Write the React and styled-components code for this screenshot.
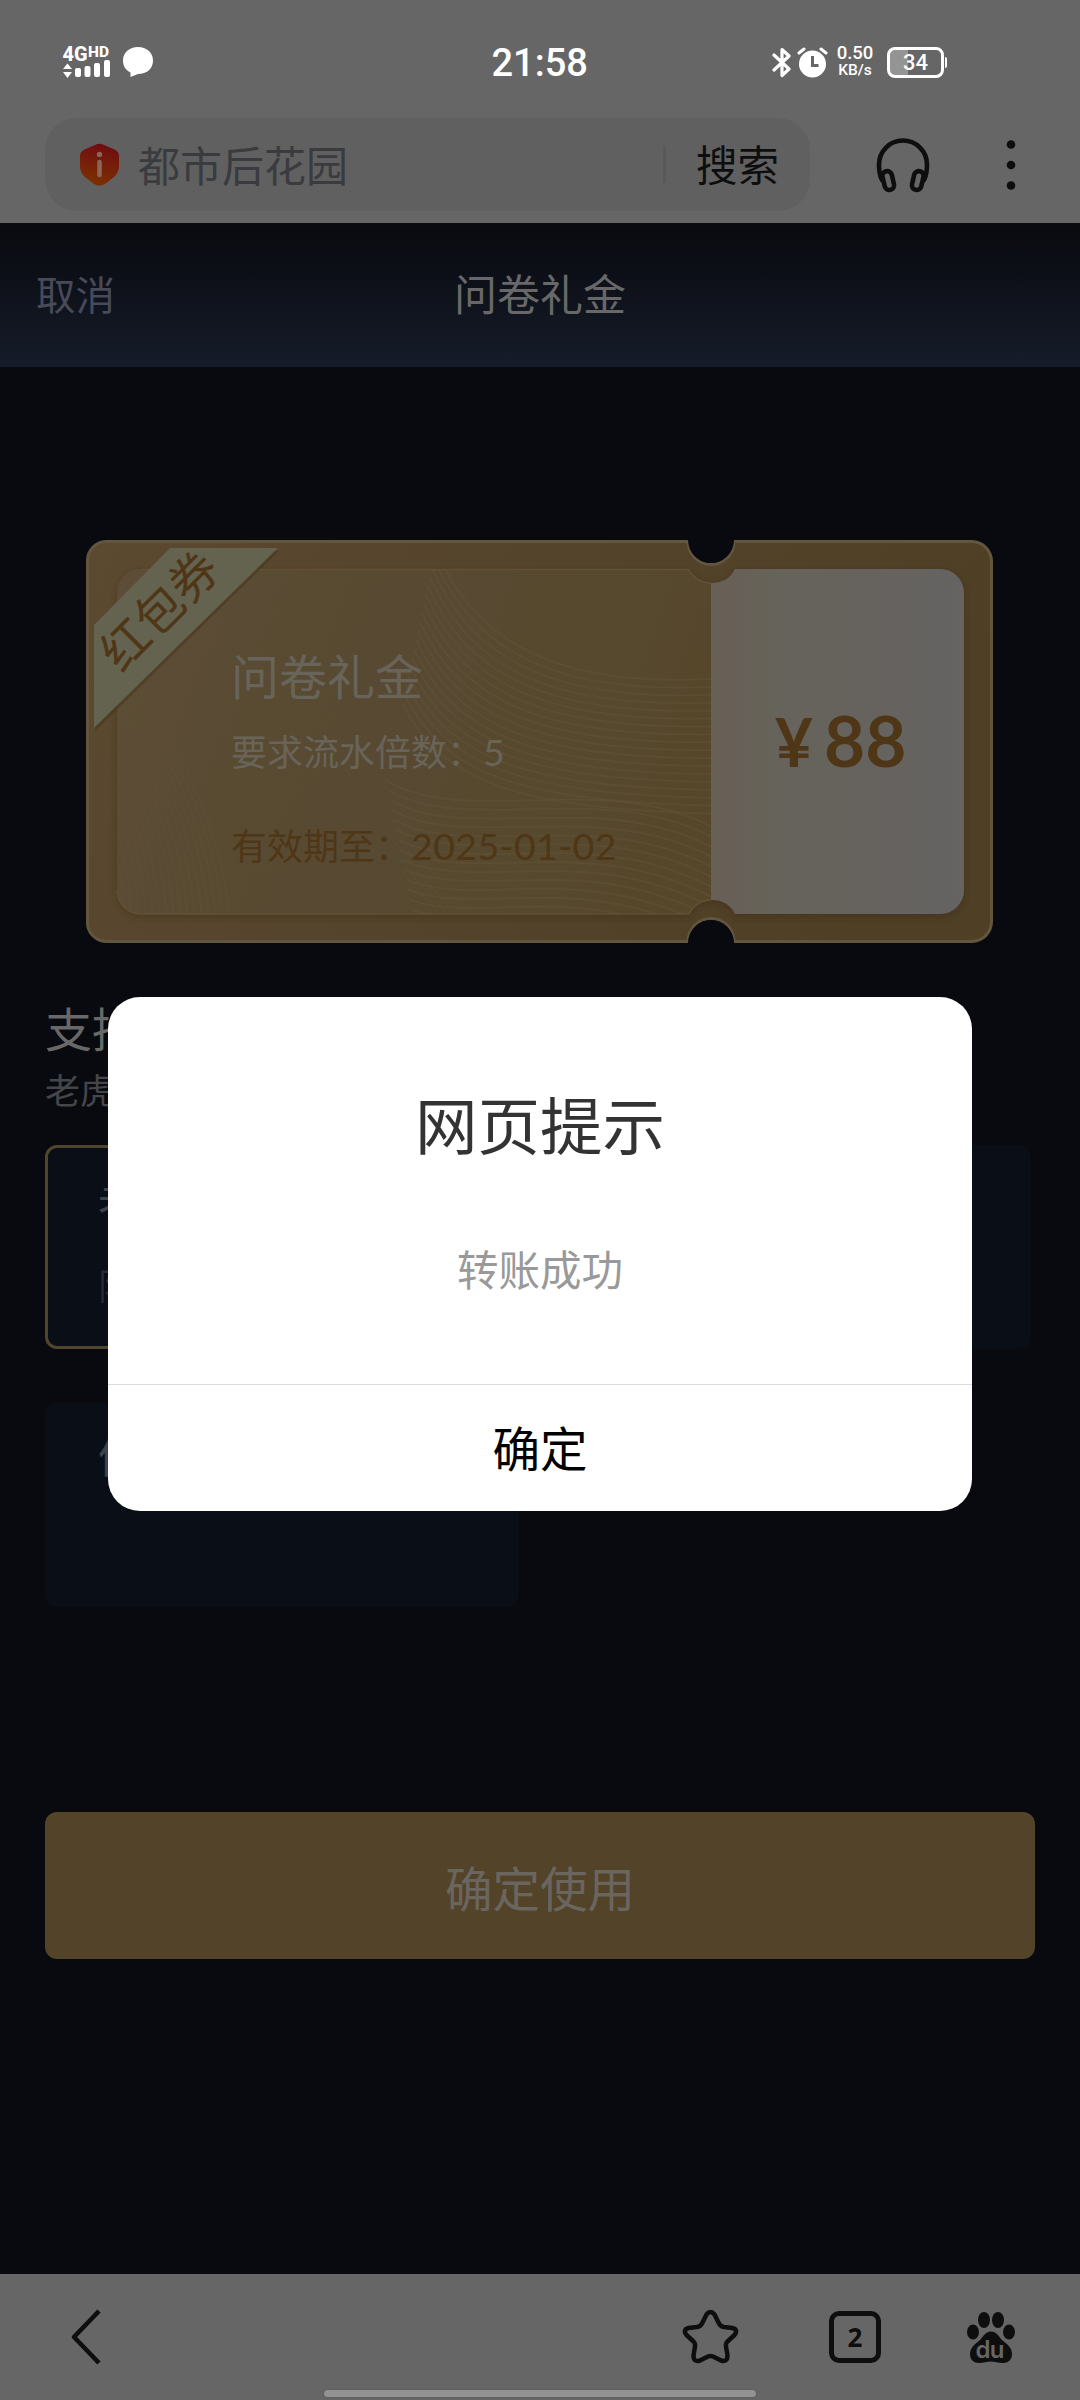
import React from "react"
import styled, { createGlobalStyle, ThemeProvider } from "styled-components"

const theme = {
  fonts: {
    primary: `"Noto Sans CJK SC", "Noto Sans", sans-serif`,
    digits: `Roboto, "Noto Sans CJK SC", sans-serif`,
    amount: `Lato, "Noto Sans CJK SC", sans-serif`,
  },
  colors: {
    page: "#090a0f",
    chrome: "#666666",
    ink: "#0e0e0e",
    card: "#090e17",
    gold: "#524329",
    brown: "#4f3617",
  },
}

const GlobalStyle = createGlobalStyle`
  * {
    box-sizing: border-box;
  }
  body {
    margin: 0;
    background: #090a0f;
  }
  h1, h2, p {
    margin: 0;
    font-weight: 400;
  }
  button {
    border: 0;
    padding: 0;
    background: none;
    font-family: inherit;
  }
  svg {
    display: block;
    flex: none;
  }
`

const Screen = styled.div`
  position: relative;
  width: 1080px;
  height: 2400px;
  overflow: hidden;
  display: flex;
  flex-direction: column;
  background: ${props => props.theme.colors.page};
  font-family: ${props => props.theme.fonts.primary};
  white-space: nowrap;
`

const BrowserTop = styled.header`
  height: 223px;
  background: ${props => props.theme.colors.chrome};
`

const StatusBar = styled.div`
  height: 118px;
  padding: 6px 133px 0 62px;
  display: grid;
  grid-template-columns: 1fr auto 1fr;
  align-items: center;
  color: #fff;
`

const StatusSide = styled.div`
  display: flex;
  align-items: center;
  justify-content: ${props => (props.$end ? "flex-end" : "flex-start")};
`

const SignalIcon = styled.svg`
  margin-right: 11px;
`

const Clock = styled.div`
  width: 96px;
  margin-left: 70px;
  padding-top: 2px;
  text-align: center;
  font-family: ${props => props.theme.fonts.digits};
  font-size: 38px;
  font-weight: 500;
  line-height: 46px;
`

const AlarmIcon = styled.svg`
  margin-left: 5px;
`

const Speed = styled.div`
  width: 38px;
  margin: 0 13px 0 8px;
  display: flex;
  flex-direction: column;
  align-items: center;
  font-family: ${props => props.theme.fonts.digits};
  font-weight: 500;
  span:first-child {
    font-size: 18.5px;
    line-height: 17px;
  }
  span:last-child {
    font-size: 15.5px;
    line-height: 17px;
  }
`

const Battery = styled.div`
  position: relative;
  width: 57px;
  height: 31px;
  margin-right: 3px;
  border: 3px solid #fff;
  border-radius: 8px;
  display: flex;
  align-items: center;
  justify-content: center;
  background: linear-gradient(90deg, #949494 18px, transparent 18px);
  font-family: ${props => props.theme.fonts.digits};
  font-size: 22px;
  font-weight: 500;
  &::after {
    content: "";
    position: absolute;
    right: -6px;
    top: 7px;
    width: 2px;
    height: 11px;
    border-radius: 0 2px 2px 0;
    background: #fff;
  }
`

const AddressRow = styled.div`
  height: 93px;
  padding-left: 45px;
  display: flex;
  align-items: center;
`

const SearchBox = styled.div`
  width: 765px;
  height: 93px;
  padding: 0 31px 0 35px;
  border-radius: 32px;
  display: flex;
  align-items: center;
  background: #606060;
`

const SiteName = styled.span`
  flex: 1;
  margin-left: 19px;
  padding-bottom: 2px;
  color: #3a3b3f;
  font-size: 42px;
  line-height: 60px;
`

const SearchButton = styled.button`
  padding: 0 0 4px 33px;
  background: linear-gradient(#58595d, #58595d) 0 50% / 3px 37px no-repeat;
  color: ${props => props.theme.colors.ink};
  font-size: 41.5px;
  line-height: 60px;
`

const HeadphoneIcon = styled.svg`
  margin-left: 65px;
`

const MoreIcon = styled.svg`
  margin-left: 75px;
`

const PageNav = styled.nav`
  height: 144px;
  padding: 0 36px 6px;
  display: grid;
  grid-template-columns: 1fr auto 1fr;
  align-items: center;
  background: linear-gradient(#0a0b0f, #0d0f18 35%, #11151f 65%, #161c2b);
  h1 {
    font-size: 43px;
    line-height: 60px;
    color: #686868;
  }
`

const CancelButton = styled.button`
  justify-self: start;
  color: #474a58;
  font-size: 39.5px;
`

const PageBody = styled.main`
  flex: 1;
  display: flex;
  flex-direction: column;
`

const Ticket = styled.section`
  position: relative;
  width: 907px;
  height: 403px;
  margin: 173px 0 0 86px;
  display: flex;
`

const TicketArt = styled.svg`
  position: absolute;
  inset: 0;
`

const TicketInfo = styled.div`
  position: relative;
  width: 625px;
  padding: 100px 0 0 145px;
  color: #68645a;
  h2 {
    font-size: 48px;
    line-height: 68px;
  }
  p {
    font-size: 36px;
    line-height: 52px;
  }
  p:nth-of-type(1) {
    margin-top: 16px;
  }
  p:nth-of-type(2) {
    margin-top: 40px;
    color: ${props => props.theme.colors.brown};
  }
`

const Digits = styled.span`
  font-family: ${props => props.theme.fonts.amount};
  font-size: 37.5px;
  letter-spacing: 0.4px;
`

const TicketAmount = styled.div`
  position: relative;
  width: 253px;
  padding-left: 6px;
  display: flex;
  justify-content: center;
  align-items: baseline;
  gap: 11px;
  color: ${props => props.theme.colors.brown};
  font-family: ${props => props.theme.fonts.amount};
  font-weight: 700;
  font-size: 71px;
  line-height: 400px;
`

const Currency = styled.span`
  font-size: 66px;
`

const RibbonText = styled.span`
  position: absolute;
  left: -1px;
  top: 37px;
  width: 144px;
  text-align: center;
  font-size: 48px;
  line-height: 62px;
  color: ${props => props.theme.colors.brown};
  transform: rotate(-45deg);
`

const Games = styled.section`
  padding: 52px 49px 0 45px;
  h2 {
    font-size: 47px;
    line-height: 64px;
    color: #686868;
  }
  & > p {
    font-size: 35px;
    line-height: 52px;
    margin-top: 4px;
    color: #45464a;
  }
`

const GameGrid = styled.div`
  margin-top: 30px;
  display: grid;
  grid-template-columns: 474px 474px;
  column-gap: 38px;
  row-gap: 54px;
`

const GameCard = styled.div`
  height: 204px;
  padding: ${props => (props.$active ? 21 : 17)}px 50px;
  border: 3px solid ${props => (props.$active ? "#50452d" : "transparent")};
  border-radius: 12px;
  background: ${props => props.theme.colors.card};
  background-clip: border-box;
  color: #3f4249;
  font-size: 43px;
  line-height: 62px;
  p:nth-child(2) {
    margin-top: 22px;
    font-size: 36px;
    color: #262b33;
  }
`

const UseButton = styled.button`
  width: 990px;
  height: 147px;
  margin: 205px 0 0 45px;
  padding-top: 1px;
  border-radius: 12px;
  background: ${props => props.theme.colors.gold};
  color: #6a665f;
  font-size: 47.5px;
`

const BottomBar = styled.footer`
  position: relative;
  height: 126px;
  padding: 35px 63px 0 70px;
  display: flex;
  align-items: flex-start;
  background: ${props => props.theme.colors.chrome};
`

const BackIcon = styled.svg`
  margin-right: auto;
`

const StarIcon = styled.svg`
  margin-right: 90px;
`

const TabCount = styled.div`
  width: 52px;
  height: 52px;
  margin: 2px 84px 0 0;
  border: 5px solid ${props => props.theme.colors.ink};
  border-radius: 10px;
  display: flex;
  align-items: center;
  justify-content: center;
  color: ${props => props.theme.colors.ink};
  font-family: "Noto Sans", sans-serif;
  font-weight: 700;
  font-size: 26px;
  line-height: 30px;
`

const HomeIndicator = styled.div`
  position: absolute;
  left: 324px;
  bottom: 3px;
  width: 432px;
  height: 7px;
  border-radius: 4px;
  background: #929292;
  box-shadow: 0 0 2px #505050;
`

const Dialog = styled.div`
  position: absolute;
  left: 108px;
  top: 997px;
  width: 864px;
  height: 514px;
  border-radius: 32px;
  display: flex;
  flex-direction: column;
  align-items: center;
  background: #fff;
  h2 {
    margin-top: 82px;
    font-size: 62.5px;
    line-height: 88px;
    color: #333;
  }
  p {
    margin-top: 71px;
    font-size: 41.5px;
    line-height: 60px;
    color: #999;
  }
`

const DialogButton = styled.button`
  width: 100%;
  height: 127px;
  margin-top: auto;
  padding-bottom: 3px;
  border-top: 1px solid #dcdcdc;
  color: #000;
  font-size: 47.5px;
`

const rings = Array.from({ length: 26 }, (_, i) => i)
const waves = Array.from({ length: 18 }, (_, i) => i)

const TicketBackground = () => (
  <TicketArt width="907" height="403" viewBox="0 0 907 403">
    <defs>
      <linearGradient id="outer" x1="0" x2="1" y1="0" y2="0.2">
        <stop offset="0" stopColor="#5b4930" />
        <stop offset="0.5" stopColor="#54442b" />
        <stop offset="1" stopColor="#4e3f25" />
      </linearGradient>
      <linearGradient id="inner" x1="0" x2="1" y1="0" y2="0.2">
        <stop offset="0" stopColor="#5d4d37" />
        <stop offset="0.3" stopColor="#594b33" />
        <stop offset="1" stopColor="#56472c" />
      </linearGradient>
      <linearGradient id="stub" x1="0" x2="1" y1="0" y2="0">
        <stop offset="0" stopColor="#675f56" />
        <stop offset="0.25" stopColor="#66635a" />
        <stop offset="1" stopColor="#656463" />
      </linearGradient>
      <clipPath id="innerClip">
        <path d="M55 29H603A24 24 0 0 0 625 43V360A24 24 0 0 0 603 374H55A24 24 0 0 1 31 350V53A24 24 0 0 1 55 29Z" />
      </clipPath>
      <filter id="soft" x="-5%" y="-5%" width="110%" height="110%">
        <feDropShadow dx="0" dy="3" stdDeviation="3" floodColor="#3c2c14" floodOpacity="0.5" />
      </filter>
    </defs>
    <path
      d="M20 1.5H602A23 23 0 0 0 648 1.5H886A20 20 0 0 1 905.5 21V382A20 20 0 0 1 886 401.5H648A23 23 0 0 0 602 401.5H20A19 19 0 0 1 1.5 382V21A19 19 0 0 1 20 1.5Z"
      fill="url(#outer)"
      stroke="#62563f"
      strokeWidth="3"
    />
    <path d="M602 0H648A23 23 0 0 1 602 0ZM602 403A23 23 0 0 1 648 403Z" fill="#090a0f" />
    <g filter="url(#soft)">
      <path
        d="M55 29H603A24 24 0 0 0 625 43V360A24 24 0 0 0 603 374H55A24 24 0 0 1 31 350V53A24 24 0 0 1 55 29Z"
        fill="url(#inner)"
      />
      <path
        d="M625 43A24 24 0 0 0 649 29H854A24 24 0 0 1 878 53V350A24 24 0 0 1 854 374H649A24 24 0 0 0 625 360Z"
        fill="url(#stub)"
      />
    </g>
    <path
      d="M55 29.5H603A24 24 0 0 0 625 43M31 350A24 24 0 0 0 55 374H603A24 24 0 0 1 625 360"
      fill="none"
      stroke="#615234"
      strokeWidth="1.5"
    />
    <g clipPath="url(#innerClip)" fill="none" stroke="#66583b" strokeWidth="1.8">
      {/* rings spreading from the left edge */}
      {rings.map(i => (
        <path
          key={i}
          opacity="0.2"
          d={`M${i * 7 - 30} 410C${i * 7 - 30} 290 ${i * 6 - 60} 190 ${i * 5 - 130} ${150 - i * 3}`}
        />
      ))}
      {rings.map(i => (
        <path
          key={i}
          opacity="0.15"
          d={`M${60 + i * 6} 20C${150 + i * 4} 110 ${130 + i * 5} 260 ${210 + i * 9} 400`}
        />
      ))}
      {/* upper waves, flattening towards the stub */}
      {waves.map(i => (
        <path
          key={i}
          opacity="0.35"
          d={`M${350 - i * 2} ${10 + i * 9}C${390 - i * 2} ${105 + i * 8} ${475 - i * 3} ${150 + i * 7} 640 ${138 + i * 8}`}
        />
      ))}
      {/* lower waves, falling away at the right */}
      {waves.map(i => (
        <path
          key={i}
          opacity="0.4"
          d={`M${300 + i * 2} ${240 + i * 10}C${380 + i * 2} ${290 + i * 8} ${530 - i * 3} ${225 + i * 9} 640 ${295 + i * 10}`}
        />
      ))}
    </g>
    <path d="M84 8H192L8 188V85Z" fill="#3e2f18" opacity="0.4" transform="translate(1 3)" />
    <path d="M84 8H192L8 188V85Z" fill="#646350" />
  </TicketArt>
)

const App = () => (
  <ThemeProvider theme={theme}>
    <GlobalStyle />
    <Screen>
      <BrowserTop>
        <StatusBar>
          <StatusSide>
            <SignalIcon width="50" height="54" viewBox="0 -10 50 54" fill="#fff">
              <text x="0.5" y="16" fontFamily="Roboto" fontWeight="800" fontSize="21" textLength="25" lengthAdjust="spacingAndGlyphs">4G</text>
              <text x="26" y="11.5" fontFamily="Roboto" fontWeight="800" fontSize="14.5" textLength="21" lengthAdjust="spacingAndGlyphs">HD</text>
              <path d="M1 24L5.500 18.500L10 24ZM1 27H10L5.500 33Z" />
              <rect x="13" y="23" width="6" height="9" rx="2" />
              <rect x="22.500" y="21" width="6" height="11" rx="2" />
              <rect x="32" y="18" width="6" height="14" rx="2" />
              <rect x="42" y="15" width="6" height="17" rx="2" />
            </SignalIcon>
            <svg width="30" height="30" viewBox="0 0 30 30" fill="#fff">
              <path d="M15 0C23.500 0 30 5.500 30 13.500C30 22 23.500 27 15 27L7.500 30V25.500C2.500 23 0 19 0 13.500C0 5.500 6.500 0 15 0Z" />
            </svg>
          </StatusSide>
          <Clock>21:58</Clock>
          <StatusSide $end>
            <svg width="20" height="31" viewBox="0 0 20 31" fill="none" stroke="#fff" strokeWidth="3.2" strokeLinejoin="round" strokeLinecap="round">
              <path d="M2 8L17 22L10 28.500V2.500L17 9L2 23" />
            </svg>
            <AlarmIcon width="31" height="31" viewBox="0 0 31 31">
              <circle cx="15.500" cy="17" r="13.500" fill="#fff" />
              <path d="M2 6L7 2M29 6L24 2" stroke="#fff" strokeWidth="3" strokeLinecap="round" />
              <path d="M15.500 9V18.500H21.500" fill="none" stroke="#666" strokeWidth="3" />
            </AlarmIcon>
            <Speed>
              <span>0.50</span>
              <span>KB/s</span>
            </Speed>
            <Battery>34</Battery>
          </StatusSide>
        </StatusBar>
        <AddressRow>
          <SearchBox>
            <svg width="39" height="43" viewBox="0 0 39 43">
              <defs>
                <linearGradient id="shield" x1="0.6" x2="0.4" y1="0" y2="1">
                  <stop offset="0" stopColor="#6f0d12" />
                  <stop offset="1" stopColor="#7d3000" />
                </linearGradient>
              </defs>
              <path
                d="M15.500 1.800Q19.500 -0.200 23.500 1.800L34.500 6.500Q39 8.500 39 13V23Q39 29.500 34 34L25 41Q19.500 44.500 14 41L5 34Q0 29.500 0 23V13Q0 8.500 4.500 6.500Z"
                fill="url(#shield)"
              />
              <circle cx="19.500" cy="11.500" r="2.700" fill="#8b6658" />
              <path d="M19.500 19V32" stroke="#8b6658" strokeWidth="4.600" strokeLinecap="round" />
            </svg>
            <SiteName>都市后花园</SiteName>
            <SearchButton>搜索</SearchButton>
          </SearchBox>
          <HeadphoneIcon width="56" height="56" viewBox="0 0 56 56" fill="none" stroke="#0e0e0e" strokeWidth="4.600" strokeLinecap="round">
            <path d="M7 43C4 37 4 31 4 27.500A24 24 0 0 1 52 27.500C52 31 52 37 49 43" />
            <rect x="8.500" y="34" width="9.500" height="19" rx="4.700" transform="rotate(-13 13.500 43.500)" />
            <rect x="38" y="34" width="9.500" height="19" rx="4.700" transform="rotate(13 42.500 43.500)" />
          </HeadphoneIcon>
          <MoreIcon width="10" height="52" viewBox="0 0 10 52" fill="#0e0e0e">
            <circle cx="5" cy="5.500" r="4.300" />
            <circle cx="5" cy="26" r="4.300" />
            <circle cx="5" cy="46.500" r="4.300" />
          </MoreIcon>
        </AddressRow>
      </BrowserTop>
      <PageNav>
        <CancelButton>取消</CancelButton>
        <h1>问卷礼金</h1>
      </PageNav>
      <PageBody>
        <Ticket>
          <TicketBackground />
          <RibbonText>红包券</RibbonText>
          <TicketInfo>
            <h2>问卷礼金</h2>
            <p>
              要求流水倍数：<Digits>5</Digits>
            </p>
            <p>
              有效期至：<Digits>2025-01-02</Digits>
            </p>
          </TicketInfo>
          <TicketAmount>
            <Currency>¥</Currency>
            <span>88</span>
          </TicketAmount>
        </Ticket>
        <Games>
          <h2>支持</h2>
          <p>老虎</p>
          <GameGrid>
            <GameCard $active>
              <p>老</p>
              <p>限</p>
            </GameCard>
            <GameCard />
            <GameCard>
              <p>体</p>
            </GameCard>
          </GameGrid>
        </Games>
        <UseButton>确定使用</UseButton>
      </PageBody>
      <BottomBar>
        <BackIcon width="34" height="58" viewBox="0 0 34 58" fill="none" stroke="#0e0e0e" strokeWidth="4.600" strokeLinejoin="round">
          <path d="M29 2L4 28L29 54" />
        </BackIcon>
        <StarIcon width="57" height="56" viewBox="0 0 57 56" fill="none" stroke="#0e0e0e" strokeWidth="4.500" strokeLinejoin="round">
          <path d="M24.500 5.500Q28.500 0.500 32.500 5.500L37 14.500Q38.500 17.500 42 18L50.500 19Q56.500 20.500 52.500 26L45.500 32.500Q43.500 34.500 44 37.500L45.500 46.500Q45.500 53.500 39 51.500L31 47.500Q28.500 46.500 26 47.500L18 51.500Q11.500 53.500 11.500 46.500L13 37.500Q13.500 34.500 11.500 32.500L4.500 26Q0.500 20.500 6.500 19L15 18Q18.500 17.500 20 14.500Z" />
        </StarIcon>
        <TabCount>2</TabCount>
        <svg width="52" height="56" viewBox="0 0 52 56" fill="#0e0e0e">
          <ellipse cx="19" cy="11" rx="6" ry="8" />
          <ellipse cx="33" cy="11" rx="6" ry="8" />
          <ellipse cx="8" cy="23" rx="6" ry="7.500" />
          <ellipse cx="44" cy="23" rx="6" ry="7.500" />
          <path d="M26 22.500C32 22.500 34 28 37 31C41 34.500 47 38 47 45C47 51 43 54 38 54C33 54 30 52.500 26 52.500C22 52.500 19 54 14 54C9 54 5 51 5 45C5 38 11 34.500 15 31C18 28 20 22.500 26 22.500Z" />
          <text x="10.500" y="49" fontFamily="Inter" fontWeight="600" fontSize="24" textLength="29" fill="#666">du</text>
        </svg>
        <HomeIndicator />
      </BottomBar>
      <Dialog>
        <h2>网页提示</h2>
        <p>转账成功</p>
        <DialogButton>确定</DialogButton>
      </Dialog>
    </Screen>
  </ThemeProvider>
)

export default App
